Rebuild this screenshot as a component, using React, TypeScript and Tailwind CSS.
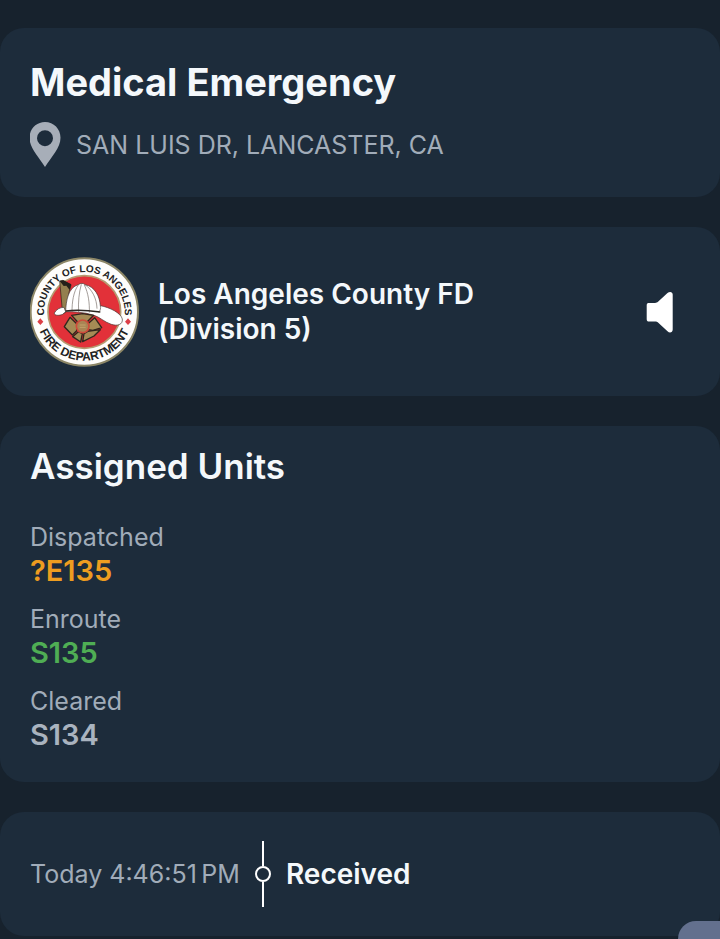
import type { ReactNode } from "react"

const units = [
  { status: "Dispatched", name: "?E135", color: "text-[#ee9d20]" },
  { status: "Enroute", name: "S135", color: "text-[#4fae54]" },
  { status: "Cleared", name: "S134", color: "text-[#a9b3bf]" },
]

function Card({ children, className }: { children: ReactNode; className: string }) {
  return <section className={`rounded-3xl bg-[#1d2c3b] px-[30px] ${className}`}>{children}</section>
}

function PinIcon() {
  return (
    <svg viewBox="0 0 32 45" className="h-[45px] w-8 shrink-0" fill="#a7aeb8" aria-hidden="true">
      <path
        fillRule="evenodd"
        d="M15 0C6.200 0-.5 7-.5 15.800C-.5 26 8 34 15 45C22 34 30.500 26 30.500 15.800C30.500 7 23.800 0 15 0ZM15 8.200a8 8 0 1 1 0 16a8 8 0 0 1 0-16Z"
      />
    </svg>
  )
}

function SpeakerIcon() {
  return (
    <svg viewBox="0 0 28 42" className="h-[42px] w-7" fill="#fff" aria-hidden="true">
      <path d="M3 12H9C10.500 12 11.200 11.500 12 10.800L21.500 2C23.500.2 26.700.5 26.700 3.500V38.500C26.700 41.500 23.500 42.300 21.500 40.200L12 31.500C11.200 30.800 10.500 30.500 9 30.500H3C1.500 30.500.7 29.800.7 28.200V14.300C.7 12.600 1.500 12 3 12Z" />
    </svg>
  )
}

function Seal() {
  return (
    <svg viewBox="29 20 330 330" className="size-[110px] shrink-0" role="img" aria-label="County of Los Angeles Fire Department">
      <defs>
        <path id="ring-top" d="M71 186A121 121 0 0 1 313 186" />
        <path id="ring-bottom" d="M46 185A146 146 0 0 0 338 185" />
      </defs>
      <circle cx="192" cy="185" r="161" fill="#fefdfb" stroke="#8d8767" strokeWidth="6" />
      <circle cx="192" cy="185" r="109" fill="#e23139" stroke="#b59a70" strokeWidth="5" />
      <g fill="#222" fontFamily="Liberation Sans, sans-serif" fontWeight="700" textAnchor="middle">
        <text fontSize="30">
          <textPath href="#ring-top" startOffset="50%">COUNTY OF LOS ANGELES</textPath>
        </text>
        <text fontSize="36">
          <textPath href="#ring-bottom" startOffset="50%">FIRE DEPARTMENT</textPath>
        </text>
      </g>
      <path d="M60 204l9 10-9 10-9-10ZM323 204l9 10-9 10-9-10Z" fill="#dc3f46" />
      {/* helmet */}
      <path d="M118 92L128 90L152 104L146 126L136 186L127 190Z" fill="#94804f" stroke="#2b241b" strokeWidth="2" />
      <path d="M118 92L129 90L153 102L148 119L138 106L130 107Z" fill="#242019" />
      <path d="M102 188C108 177 119 171 131 171L136 184L127 192C117 196 101 197 102 188Z" fill="#fff" stroke="#3a332f" strokeWidth="2" />
      <path
        d="M136 184C137 151 144 111 174 103C180 98 190 98 194 103C225 109 238 139 240 166C268 171 302 188 306 206C308 223 291 228 273 222C251 215 238 199 218 194C191 185 158 184 136 184Z"
        fill="#fff"
        stroke="#453b36"
        strokeWidth="2"
      />
      <path
        d="M174 104C159 124 155 157 155 184M183 102C176 126 173 157 175 185M192 104C204 128 208 158 207 187M194 103C216 118 229 145 230 175"
        fill="none"
        stroke="#756d67"
        strokeWidth="2"
      />
      <path d="M136 182C166 178 211 181 240 185" fill="none" stroke="#2c2824" strokeWidth="4" />
      <path d="M240 166C242 173 240 181 235 187" fill="none" stroke="#51463f" strokeWidth="2" />
      {/* badge: four petals around a red ring */}
      <g fill="#a58b55" stroke="#30271d" strokeWidth="4" strokeLinejoin="round">
        <path d="M154 195L187 190L220 195L200 215L172 215Z" />
        <path d="M149 201L169 220L169 241L156 254L132 229Z" />
        <path d="M223 202L244 232L218 240L203 238L203 220Z" />
        <path d="M157 259L174 244L186 250L181 275Z" />
        <path d="M187 274L191 250L202 243L240 238L221 257Z" />
      </g>
      <circle cx="187" cy="228" r="19" fill="#aa8554" stroke="#cf4c3b" strokeWidth="5" />
      <path d="M178 224h18M178 231h18" stroke="#c4a36c" strokeWidth="3" />
    </svg>
  )
}

export default function App() {
  return (
    <div className="relative min-h-screen overflow-hidden bg-[#17222d] pt-7 font-['Inter',sans-serif] text-[#f4f8fb]">
      <main className="flex flex-col gap-[30px]">
        <Card className="pt-8 pb-[30px]">
          <h1 className="text-[38px] leading-[44px] font-bold">Medical Emergency</h1>
          <div className="mt-[18px] flex items-center gap-[14px] text-[25px] leading-8 text-[#a1acb9]">
            <PinIcon />
            <p>SAN LUIS DR, LANCASTER, CA</p>
          </div>
        </Card>

        <Card className="flex items-center gap-[18px] pt-[30px] pb-[29px]">
          <Seal />
          <h2 className="w-[340px] text-[28px] leading-[35px] font-semibold">
            Los Angeles County FD (Division 5)
          </h2>
          <button aria-label="Play audio" className="mr-4 ml-auto">
            <SpeakerIcon />
          </button>
        </Card>

        <Card className="pt-5 pb-[30px]">
          <h2 className="text-[35px] leading-10 font-semibold">Assigned Units</h2>
          <dl className="mt-[34px] flex flex-col gap-[14px]">
            {units.map((unit) => (
              <div key={unit.name}>
                <dt className="text-[25px] leading-[34px] text-[#a1acb9]">{unit.status}</dt>
                <dd className={`text-[29px] leading-[34px] font-semibold ${unit.color}`}>{unit.name}</dd>
              </div>
            ))}
          </dl>
        </Card>

        <Card className="flex items-center py-[29px]">
          <time className="text-[25px] leading-[34px] text-[#a1acb9]">Today 4:46:51{"\u202f"}PM</time>
          <div className="mx-[15px] flex flex-col items-center" aria-hidden="true">
            <div className="h-[25px] w-0.5 bg-white" />
            <div className="size-4 rounded-full border-2 border-white" />
            <div className="h-[25px] w-0.5 bg-white" />
          </div>
          <p className="text-[28px] leading-[34px] font-semibold">Received</p>
        </Card>
      </main>

      <button
        aria-label="More actions"
        className="absolute right-0 bottom-0 h-[18px] w-[42px] rounded-tl-3xl bg-[#63708e]"
      />
    </div>
  )
}
